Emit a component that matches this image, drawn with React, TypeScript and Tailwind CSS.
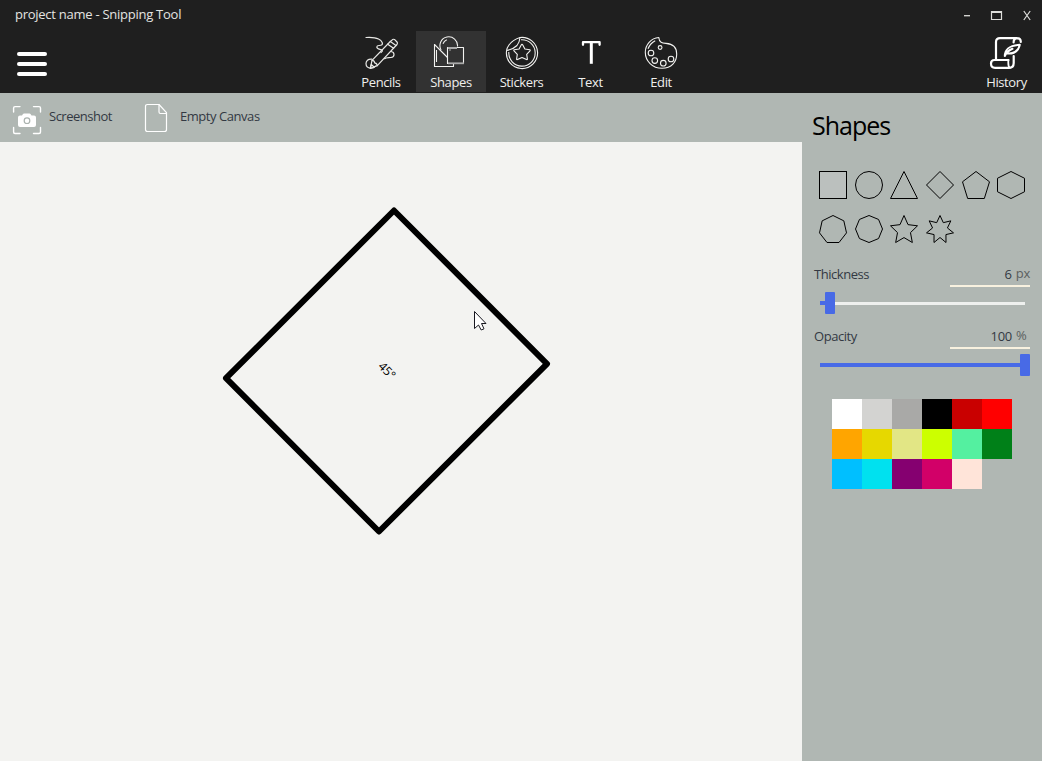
import type { ReactNode } from "react";

function PencilsIcon() {
  return (
    <svg className="translate-x-px" width="34" height="34" viewBox="0 0 34 34" fill="none" stroke="#e8e8e5" strokeWidth="1.2" strokeLinejoin="round" strokeLinecap="round">
      <path d="M1 1.5C6 1.2 10 1.2 13.5 3C17 4.8 18.5 7.8 16.5 9C14.5 10 12 8.8 11.8 11C11.8 13.5 16 13 17.3 14.3Q17.8 15.3 16 16.6" />
      <path d="M25.3 5.5L27.6 3.6Q28.8 2.8 29.9 3.8L32 6Q33 7.2 32 8.5L12.3 29.6L5.3 32.5L7 24.3Z" />
      <path d="M7 24.3Q9.5 24.3 9.6 26.8Q12 27 12.3 29.6M22.7 8.2L28.6 12.2M25.3 5.5L31 9.5M5.3 32.5L6.3 28.5L9 31" />
      <path d="M6.8 23.1C3 22.8 1 25 1 27.5C1 30.5 3 32 5.8 32.2C8 32.2 9.5 31.5 10.3 30.2M26 15.5C30 16 30 21 26 21.5C23.5 21.8 21 21.5 19.5 22.7" />
    </svg>
  );
}

function ShapesIcon() {
  return (
    <svg className="-translate-x-px" width="34" height="34" viewBox="0 0 34 34" fill="none" stroke="#f2f2f0" strokeWidth="1.1" strokeLinejoin="round">
      <path d="M8.1 14A8.8 8.8 0 1 1 24.5 10.5M10 7.8Q11 5 13.8 3.8" />
      <path d="M14.5 21.5L1.5 8.5V30.5H20.5V27.5M3.5 14V26" />
      <path d="M14.5 11.5H30.5V27.5H14.5Z" />
      <path d="M15 12H24M17 13.5V14.5" stroke="#aaa" strokeWidth="2" />
      <path d="M15 27.3H31" stroke="#aaa" strokeWidth="1.8" />
    </svg>
  );
}

function StickersIcon() {
  return (
    <svg width="34" height="34" viewBox="0 0 34 34" fill="none" stroke="#f2f2f0" strokeWidth="1.1" strokeLinejoin="round">
      <path d="M15 1.5A15.6 15.6 0 1 1 1.6 14.5Q8 13.5 12 9.5Q14.5 6.5 15 1.5Z" />
      <path d="M16 3.8A13.2 13.2 0 1 1 3.8 16M15 1.5Q7.5 4 4 9Q1.8 12 1.6 14.5" />
      <path d="M17 8.4Q17.5 8.4 17.8 9L19.9 13L24.7 13.8Q25.6 14.1 25 14.9L21.7 18.4L22.4 23Q22.4 24 21.5 23.6L17 21.5L12.5 23.6Q11.6 24 11.6 23L12.3 18.4L9 14.9Q8.4 14.1 9.3 13.8L14.1 13L16.2 9Q16.5 8.4 17 8.4Z" />
    </svg>
  );
}

function TextIcon() {
  return (
    <svg width="34" height="34" viewBox="0 0 34 34" fill="none" stroke="#fff" strokeWidth="2.3" strokeLinecap="round" strokeLinejoin="round">
      <path d="M9 8.8V6.2H25.6V8.8" />
      <path d="M17.3 6V27.8" strokeWidth="3" strokeLinecap="butt" />
    </svg>
  );
}

function PaletteIcon() {
  return (
    <svg width="34" height="34" viewBox="0 0 34 34" fill="none" stroke="#f2f2f0" strokeWidth="1.1" strokeLinejoin="round">
      <path d="M14.8 1.5C7 2 1.3 9 1.3 16.2C1.3 25 8.5 32.3 18 32.3C27.5 32.3 32.7 26 32.7 18C32.7 11 28 7.8 22 7.4C18 7.1 15.2 6.5 14.8 1.5Z" />
      <path d="M4 12.8Q6.2 7.3 11.2 4.8" />
      <circle cx="16.1" cy="11.5" r="1.9" />
      <circle cx="7" cy="17" r="2.8" />
      <circle cx="10.8" cy="24.6" r="2.8" />
      <circle cx="19.3" cy="27.2" r="2.8" />
      <circle cx="27" cy="23" r="2.8" />
    </svg>
  );
}

function HistoryIcon() {
  return (
    <svg className="-translate-x-px" width="34" height="34" viewBox="0 0 34 34" fill="none" stroke="#fff" strokeWidth="2.2" strokeLinecap="round" strokeLinejoin="round">
      <path d="M7 23V6Q7 2.2 11 2.2H28Q31.8 2.2 31.8 6M28 2.2Q24.6 2.5 24.6 6.5" />
      <path d="M19.5 24H5.5Q2 24 2 27.5Q2 31.8 6 31.8H20Q24.7 31.8 24.7 27V20" />
      <path d="M19.3 24V27Q19.3 31 21 31.8" strokeWidth="1.8" />
      <path d="M15.8 20C16 13 20 9.5 30.8 8.8C29.5 14.5 25.5 18 18.5 17.5M15.8 20Q18 15 23.5 12.8" strokeWidth="2" />
    </svg>
  );
}

function CameraIcon() {
  return (
    <svg width="30" height="30" viewBox="0 0 30 30" fill="none" stroke="#fff" strokeWidth="1.4" strokeLinecap="round">
      <path d="M1.6 7V3Q1.6 1.6 3 1.6H8M21.5 1.6H27Q28.5 1.6 28.5 3V7M1.6 22.5V27Q1.6 28.5 3 28.5H8M21.5 28.5H27Q28.5 28.5 28.5 27V22.5" />
      <path d="M7.5 10.5H10L11 9Q11.3 8.5 12 8.5H17.5Q18.2 8.5 18.5 9L19.5 10.5H22Q24 10.5 24 12.5V20Q24 22 22 22H8Q6 22 6 20V12.5Q6 10.5 8 10.5Z" fill="#fff" stroke="none" />
      <circle cx="15" cy="15.7" r="2.8" stroke="#abb3af" strokeWidth="1.2" />
    </svg>
  );
}

function PageIcon() {
  return (
    <svg width="24" height="30" viewBox="0 0 24 30" fill="none" stroke="#fff" strokeWidth="1.2" strokeLinejoin="round">
      <path d="M3.5 1.5H15L22.5 9.7V26.5Q22.5 28.5 20.5 28.5H3.5Q1.5 28.5 1.5 26.5V3.5Q1.5 1.5 3.5 1.5Z" />
      <path d="M15 1.5V9Q15 10.5 16.5 10.5H22.5" />
    </svg>
  );
}

function polygon(sides: number) {
  return Array.from({ length: sides }, (_, i) => {
    const a = (i * 2 * Math.PI) / sides - Math.PI / 2;
    return [Math.cos(a), Math.sin(a)];
  });
}

function star(tips: number, inner: number) {
  return polygon(tips * 2).map(([x, y], i) => (i % 2 ? [x * inner, y * inner] : [x, y]));
}

// Stretches the outline so that it fills the 28px tile in both directions.
function fit(points: number[][]) {
  const xs = points.map((p) => p[0]);
  const ys = points.map((p) => p[1]);
  const x0 = Math.min(...xs);
  const y0 = Math.min(...ys);
  const w = Math.max(...xs) - x0;
  const h = Math.max(...ys) - y0;
  return points
    .map(([x, y]) => `${(0.5 + (27 * (x - x0)) / w).toFixed(2)},${(0.5 + (27 * (y - y0)) / h).toFixed(2)}`)
    .join(" ");
}

const outlines = [polygon(3), polygon(4), polygon(5), polygon(6), polygon(7), polygon(8), star(5, 0.48), star(7, 0.55)];

function ShapeTiles() {
  return (
    <div className="mt-[26px] grid auto-rows-[44px] grid-cols-[repeat(6,35.65px)] pl-[17px]">
      <svg width="28" height="28" viewBox="0 0 28 28" fill="#bbc0be" stroke="#000">
        <rect x="0.5" y="0.5" width="27" height="27" />
      </svg>
      <svg width="28" height="28" viewBox="0 0 28 28" fill="none" stroke="#000">
        <circle cx="14" cy="14" r="13.5" />
      </svg>
      {outlines.map((points, i) => (
        <svg key={i} width="28" height="28" viewBox="0 0 28 28" fill="none" stroke="#000" strokeWidth="1" overflow="visible">
          <polygon points={fit(points)} />
        </svg>
      ))}
    </div>
  );
}

function Tab({ label, width, active, children }: { label: string; width: string; active?: boolean; children: ReactNode }) {
  return (
    <button className={`${width} flex h-[61px] flex-col items-center pt-[5px] ${active ? "bg-[#323232]" : ""}`}>
      {children}
      <span className="mt-[3px] text-[13px] leading-[18px] tracking-[-0.4px] text-[#efefed]">{label}</span>
    </button>
  );
}

function Slider({ label, value, unit, fill, full }: { label: string; value: string; unit: string; fill: string; full?: boolean }) {
  return (
    <div className="h-[62px] pl-3 pr-3">
      <div className="flex h-[23px] items-start justify-between">
        <span className="pt-px text-[13px] leading-[18px] tracking-[-0.45px] text-[#333943]">{label}</span>
        <div className="flex h-[23px] w-20 border-b-2 border-[#f8f1df] text-[13px] leading-[18px]">
          <span className="w-[62px] pt-px text-right tracking-[-0.3px] text-[#333943]">{value}</span>
          <span className="pl-1 tracking-[-0.2px] text-[#5b605f]">{unit}</span>
        </div>
      </div>
      <div className="ml-[6px] mt-[5px] flex h-[22px] w-[210px] items-center">
        <div className={`h-1 bg-[#486ae6] ${fill}`} />
        <div className="h-[22px] w-[10px] shrink-0 rounded-[1px] bg-[#486ae6]" />
        {!full && <div className="mr-[5px] h-[3px] grow bg-[#eef0ee]" />}
      </div>
    </div>
  );
}

const swatches = [
  "bg-[#ffffff]", "bg-[#d3d3d1]", "bg-[#a9a9a7]", "bg-[#000000]", "bg-[#c90000]", "bg-[#ff0000]",
  "bg-[#ffa500]", "bg-[#e6d800]", "bg-[#e2e685]", "bg-[#ccff00]", "bg-[#54f0a0]", "bg-[#008018]",
  "bg-[#00bfff]", "bg-[#00e1ef]", "bg-[#850070]", "bg-[#d20068]", "bg-[#ffe4d9]",
];

export default function App() {
  return (
    <div className="flex h-[761px] w-[1042px] flex-col overflow-hidden bg-[#f3f3f1] font-['Open_Sans','Noto_Sans',sans-serif]">
      <header className="h-[93px] shrink-0 bg-[#1f1f1f]">
        <div className="flex h-[31px] items-start justify-between pl-[15px] pr-[11px]">
          <span className="pt-[5px] text-[13px] leading-[18px] tracking-[-0.26px] text-[#e4e4e1]">project name - Snipping Tool</span>
          <svg width="70" height="31" viewBox="0 0 70 31" fill="none" stroke="#dededb">
            <path d="M3 15.7H9" strokeWidth="1.3" />
            <path d="M30.5 11.5H40.5V19.5H30.5Z" strokeWidth="1.2" />
            <path d="M30 12H41" strokeWidth="2" />
            <path d="M62.8 11L69.2 20M69.2 11L62.8 20" strokeWidth="1.2" />
          </svg>
        </div>
        <div className="flex h-[62px]">
          <div className="w-[346px] pl-[17px] pt-[21px]">
            <div className="flex w-[30px] flex-col gap-[6px]">
              <div className="h-1 rounded-full bg-white" />
              <div className="h-1 rounded-full bg-white" />
              <div className="h-1 rounded-full bg-white" />
            </div>
          </div>
          <Tab label="Pencils" width="w-[70px]"><PencilsIcon /></Tab>
          <Tab label="Shapes" width="w-[70px]" active><ShapesIcon /></Tab>
          <Tab label="Stickers" width="w-[71px]"><StickersIcon /></Tab>
          <Tab label="Text" width="w-[67px]"><TextIcon /></Tab>
          <Tab label="Edit" width="w-[74px]"><PaletteIcon /></Tab>
          <div className="grow" />
          <Tab label="History" width="w-[71px]"><HistoryIcon /></Tab>
        </div>
      </header>

      <div className="flex grow">
        <main className="flex w-[802px] flex-col">
          <div className="flex h-[49px] items-start bg-[#b0b7b3] text-[13px] leading-[18px] text-[#333943]">
            <button className="flex items-start pl-3 pt-3">
              <CameraIcon />
              <span className="w-[102px] pl-[7px] pt-[2px] text-left tracking-[-0.5px]">Screenshot</span>
            </button>
            <button className="flex items-start pt-[10px]">
              <PageIcon />
              <span className="pl-3 pt-1 tracking-[-0.45px]">Empty Canvas</span>
            </button>
          </div>
          <svg width="802" height="619" viewBox="0 142 802 619">
            <path d="M394 210.5L547 363.8L379 531.5L226 378.2Z" fill="none" stroke="#000" strokeWidth="6" strokeLinejoin="round" />
            <text x="377.5" y="367" fontSize="12" letterSpacing="-0.2" fill="#000" transform="rotate(45 377.5 367)">45°</text>
            <path d="M474.5 311.5V328.5L478.5 325L481.2 330L484 328.8L481.5 323.5H486Z" fill="#fff" stroke="#17171f" strokeWidth="1" />
          </svg>
        </main>

        <aside className="w-60 bg-[#b0b7b3]">
          <h1 className="pl-[10px] pt-3 text-[25px] leading-[40px] tracking-[-1px] text-black">Shapes</h1>
          <ShapeTiles />
          <div className="mt-[5px]">
            <Slider label="Thickness" value="6" unit="px" fill="w-[5px]" />
            <Slider label="Opacity" value="100" unit="%" fill="w-[200px]" full />
          </div>
          <div className="ml-[30px] mt-[11px] grid w-[180px] grid-cols-6">
            {swatches.map((color) => (
              <div key={color} className={`h-[30px] ${color}`} />
            ))}
          </div>
        </aside>
      </div>
    </div>
  );
}
